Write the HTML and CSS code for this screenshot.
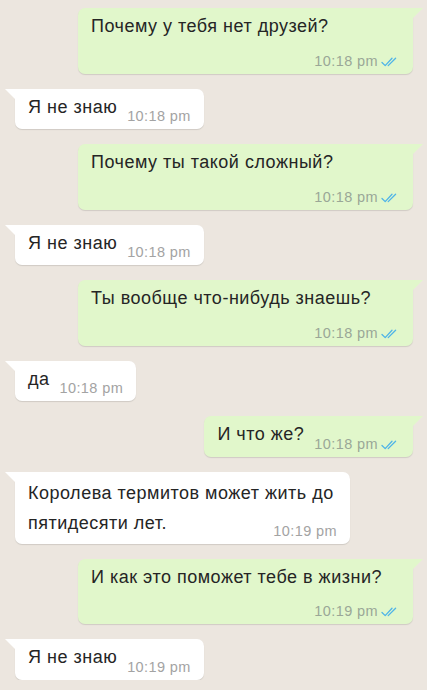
FILE: index.html
```html
<!DOCTYPE html>
<html lang="ru">
<head>
  <meta charset="UTF-8" />
  <meta name="viewport" content="width=device-width, initial-scale=1.0" />
  <title>Чат</title>
  <link rel="stylesheet" href="styles.css">
</head>
<body>
  <div class="chat">
    <div class="msg out">Почему у тебя нет друзей?<span class="meta">10:18 pm<svg class="ticks" viewBox="0 0 17 10"><path d="M1 5.5 L4.2 8.6 L11 1.2 M7.2 8.6 L14.6 1.2" /></svg></span></div>

    <div class="msg in">Я не знаю<span class="meta">10:18 pm</span></div>

    <div class="msg out">Почему ты такой сложный?<span class="meta">10:18 pm<svg class="ticks" viewBox="0 0 17 10"><path d="M1 5.5 L4.2 8.6 L11 1.2 M7.2 8.6 L14.6 1.2" /></svg></span></div>

    <div class="msg in">Я не знаю<span class="meta">10:18 pm</span></div>

    <div class="msg out">Ты вообще что-нибудь знаешь?<span class="meta">10:18 pm<svg class="ticks" viewBox="0 0 17 10"><path d="M1 5.5 L4.2 8.6 L11 1.2 M7.2 8.6 L14.6 1.2" /></svg></span></div>

    <div class="msg in">да<span class="meta">10:18 pm</span></div>

    <div class="msg out">И что же?<span class="meta">10:18 pm<svg class="ticks" viewBox="0 0 17 10"><path d="M1 5.5 L4.2 8.6 L11 1.2 M7.2 8.6 L14.6 1.2" /></svg></span></div>

    <div class="msg in multi">Королева термитов может жить до пятидесяти лет.<span class="meta">10:19 pm</span></div>

    <div class="msg out">И как это поможет тебе в жизни?<span class="meta">10:19 pm<svg class="ticks" viewBox="0 0 17 10"><path d="M1 5.5 L4.2 8.6 L11 1.2 M7.2 8.6 L14.6 1.2" /></svg></span></div>

    <div class="msg in">Я не знаю<span class="meta">10:19 pm</span></div>
  </div>
</body>
</html>
```

FILE: styles.css
```css
body {
  margin: 0;
  padding: 0;
  font-family: "Liberation Sans", Arial, sans-serif;
  background: #ece6df;
  color: #252525;
  overflow: hidden;
}
.chat {
  display: flex;
  flex-direction: column;
  gap: 15px;
  padding: 8px 14px 0 15px;
}
.msg {
  position: relative;
  max-width: 335px;
  box-sizing: border-box;
  padding: 6px 13px 5px 13px;
  font-size: 18px;
  letter-spacing: 0.5px;
  line-height: 25px;
  border-radius: 7px;
  box-shadow: 0 1px 1px rgba(0, 0, 0, 0.12);
}
.msg::before {
  content: "";
  position: absolute;
  top: 0;
  width: 0;
  height: 0;
}
.msg.out {
  align-self: flex-end;
  background: #e1f7cb;
  padding-right: 15px;
  border-top-right-radius: 0;
}
.msg.out::before {
  right: -10px;
  border-top: 10px solid #e1f7cb;
  border-right: 10px solid transparent;
}
.msg.in {
  align-self: flex-start;
  background: #fff;
  border-top-left-radius: 0;
}
.msg.in::before {
  left: -10px;
  border-top: 10px solid #fff;
  border-left: 10px solid transparent;
}
.meta {
  float: right;
  margin: 13.5px 0 0 10px;
  font-size: 14.5px;
  letter-spacing: 0.4px;
  line-height: 16px;
  color: #a3a3a3;
  white-space: nowrap;
}
.out .meta {
  color: #9aa797;
}
.msg.multi {
  line-height: 30px;
}
.msg.multi .meta {
  margin-top: 15px;
}
.ticks {
  width: 17px;
  height: 10px;
  margin-left: 3px;
  vertical-align: -1px;
  fill: none;
  stroke: #4fb4e8;
  stroke-width: 1.3;
  stroke-linecap: round;
  stroke-linejoin: round;
}
```
